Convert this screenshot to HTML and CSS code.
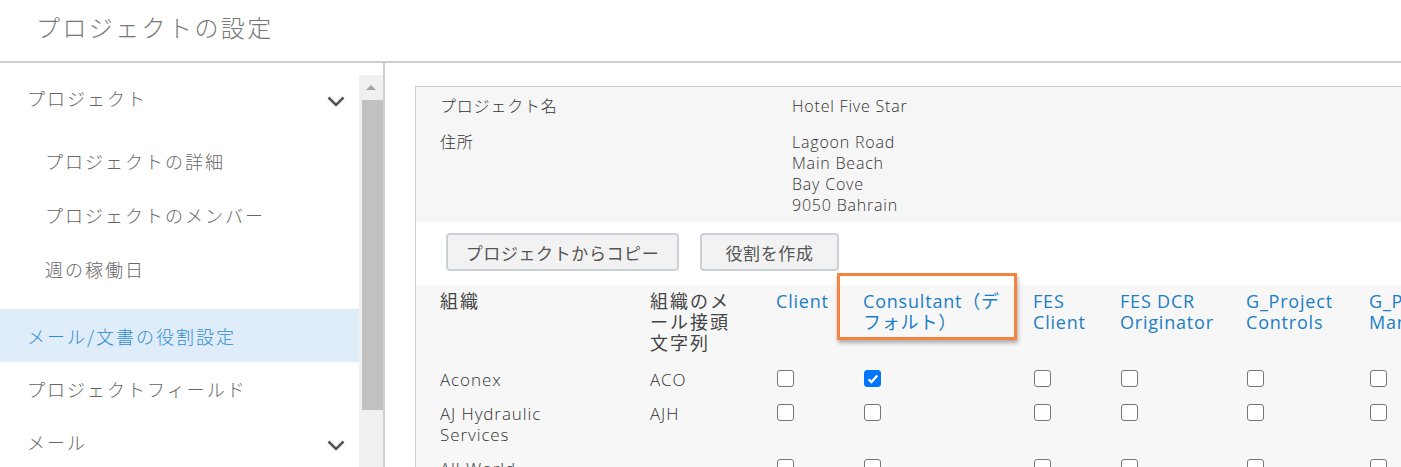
FILE: index.html
```html
<!DOCTYPE html>
<html lang="ja">
<head>
<meta charset="utf-8">
<title>プロジェクトの設定</title>
<link rel="stylesheet" href="styles.css">
</head>
<body>
<header class="topbar">
  <h1 class="title">プロジェクトの設定</h1>
</header>
<div class="main">
  <aside class="sidebar">
    <nav class="nav">
      <div class="nav-item nav-group">
        <span>プロジェクト</span>
        <svg class="chev" width="18" height="11" viewBox="0 0 18 11"><polyline points="1.5,1.5 9,9 16.5,1.5" fill="none" stroke="#555" stroke-width="2.6"/></svg>
      </div>
      <div class="subnav">
        <div class="sub-item">プロジェクトの詳細</div>
        <div class="sub-item">プロジェクトのメンバー</div>
        <div class="sub-item">週の稼働日</div>
      </div>
      <div class="nav-item active">メール/文書の役割設定</div>
      <div class="nav-item">プロジェクトフィールド</div>
      <div class="nav-item nav-group">
        <span>メール</span>
        <svg class="chev" width="18" height="11" viewBox="0 0 18 11"><polyline points="1.5,1.5 9,9 16.5,1.5" fill="none" stroke="#555" stroke-width="2.6"/></svg>
      </div>
    </nav>
    <div class="scrollbar">
      <div class="sb-up"><span class="sb-arrow"></span></div>
      <div class="sb-thumb"></div>
    </div>
  </aside>
  <section class="content">
    <div class="panel">
      <div class="info">
        <div class="info-row">
          <div class="info-label">プロジェクト名</div>
          <div class="info-value">Hotel Five Star</div>
        </div>
        <div class="info-row">
          <div class="info-label">住所</div>
          <div class="info-value">Lagoon Road<br>Main Beach<br>Bay Cove<br>9050 Bahrain</div>
        </div>
      </div>
      <div class="actions">
        <button class="btn btn-copy">プロジェクトからコピー</button>
        <button class="btn btn-create">役割を作成</button>
      </div>
      <div class="roles">
        <div class="th">組織</div>
        <div class="th">組織のメ<br>ール接頭<br>文字列</div>
        <div class="th role">Client</div>
        <div class="th role">Consultant（デ<br>フォルト）</div>
        <div class="th role">FES<br>Client</div>
        <div class="th role">FES DCR<br>Originator</div>
        <div class="th role">G_Project<br>Controls</div>
        <div class="th role">G_Project<br>Management</div>

        <div class="td">Aconex</div>
        <div class="td">ACO</div>
        <div class="td"><input type="checkbox" class="cb"></div>
        <div class="td"><input type="checkbox" class="cb" checked></div>
        <div class="td"><input type="checkbox" class="cb"></div>
        <div class="td"><input type="checkbox" class="cb"></div>
        <div class="td"><input type="checkbox" class="cb"></div>
        <div class="td"><input type="checkbox" class="cb"></div>

        <div class="td">AJ Hydraulic<br>Services</div>
        <div class="td">AJH</div>
        <div class="td"><input type="checkbox" class="cb"></div>
        <div class="td"><input type="checkbox" class="cb"></div>
        <div class="td"><input type="checkbox" class="cb"></div>
        <div class="td"><input type="checkbox" class="cb"></div>
        <div class="td"><input type="checkbox" class="cb"></div>
        <div class="td"><input type="checkbox" class="cb"></div>

        <div class="td">All World<br>Logistics</div>
        <div class="td"></div>
        <div class="td"><input type="checkbox" class="cb"></div>
        <div class="td"><input type="checkbox" class="cb"></div>
        <div class="td"><input type="checkbox" class="cb"></div>
        <div class="td"><input type="checkbox" class="cb"></div>
        <div class="td"><input type="checkbox" class="cb"></div>
        <div class="td"><input type="checkbox" class="cb"></div>
      </div>
      <div class="highlight"></div>
    </div>
  </section>
</div>
</body>
</html>
```
FILE: styles.css
```css
html, body {
  margin: 0;
  padding: 0;
  width: 1401px;
  height: 467px;
  overflow: hidden;
  background: #fff;
  font-family: "Noto Sans CJK JP", "Noto Sans", sans-serif;
}

.topbar {
  height: 61px;
  border-bottom: 2px solid #cfcfcf;
  display: flex;
  align-items: center;
  padding-left: 36px;
}

.title {
  margin: 0;
  font-size: 24px;
  font-weight: 300;
  letter-spacing: 2.4px;
  color: #777;
  line-height: 1;
  padding-bottom: 8px;
}

.main {
  display: flex;
  height: 404px;
}

.sidebar {
  width: 383px;
  flex: none;
  display: flex;
  border-right: 2px solid #cfcfcf;
}

.nav {
  width: 359px;
  flex: none;
  padding-top: 8px;
}

.nav-item {
  height: 53px;
  display: flex;
  align-items: center;
  justify-content: space-between;
  padding: 0 14px 0 27px;
  font-size: 18px;
  font-weight: 300;
  letter-spacing: 2px;
  color: #666;
}

.nav-group {
  height: 54px;
}

.chev {
  margin-top: 6px;
}

.nav-item.active {
  background: #dfecf9;
  color: #2f8bd3;
}

.subnav {
  padding: 9px 0 13px;
}

.sub-item {
  height: 54px;
  display: flex;
  align-items: center;
  padding-left: 45px;
  font-size: 18px;
  font-weight: 300;
  letter-spacing: 2px;
  color: #666;
}

.scrollbar {
  width: 24px;
  flex: none;
  margin-top: 12px;
  background: #f0f0f0;
  display: flex;
  flex-direction: column;
  align-items: flex-end;
}

.sb-up {
  height: 25px;
  width: 24px;
  display: flex;
  justify-content: center;
  align-items: center;
}

.sb-arrow {
  width: 0;
  height: 0;
  border-left: 5px solid transparent;
  border-right: 5px solid transparent;
  border-bottom: 5px solid #a3a3a3;
}

.sb-thumb {
  width: 21px;
  height: 310px;
  background: #c1c1c1;
}

.content {
  flex: 1;
  padding: 23px 0 0 30px;
  overflow: hidden;
}

.panel {
  position: relative;
  width: 1150px;
  border-left: 1px solid #cfcfcf;
  border-top: 1px solid #cfcfcf;
  background: #f7f7f7;
  color: #333;
  font-family: "Open Sans", "Noto Sans CJK JP", sans-serif;
  font-weight: 300;
  font-size: 16px;
  min-height: 400px;
}

.info {
  background: #f6f6f6;
  padding: 9px 0 6px 24px;
  display: flex;
  flex-direction: column;
  gap: 15px;
  line-height: 21px;
  letter-spacing: 0.8px;
}

.info-row {
  display: flex;
}

.info-label {
  width: 352px;
  flex: none;
}

.actions {
  background: #fff;
  height: 63px;
  display: flex;
  align-items: flex-start;
  gap: 21px;
  padding: 11px 0 0 30px;
  box-sizing: border-box;
}

.btn {
  height: 38px;
  border: 2px solid #c9d0d8;
  border-radius: 4px;
  background: #f2f2f2;
  font-family: "Noto Sans CJK JP", sans-serif;
  font-weight: 400;
  font-size: 17px;
  letter-spacing: 0.6px;
  color: #555;
  padding: 0 16px;
}

.btn-copy { width: 233px; }
.btn-create { width: 139px; }

.roles {
  display: grid;
  grid-template-columns: 210px 126px 87px 170px 87px 126px 123px 130px;
  padding-left: 24px;
  line-height: 21px;
}

.th {
  padding: 6px 6px 8px 0;
  font-size: 18px;
  font-weight: 400;
  letter-spacing: 2px;
  color: #444;
}

.th.role {
  color: #1c7ec5;
  letter-spacing: 0.8px;
  white-space: nowrap;
}

.td {
  padding: 7px 6px 6px 0;
  font-size: 17px;
  letter-spacing: 0.9px;
  color: #333;
}

.cb {
  -webkit-appearance: none;
  appearance: none;
  display: block;
  box-sizing: border-box;
  width: 17px;
  height: 17px;
  margin: 1px 0 0 1px;
  border: 1.5px solid #767676;
  border-radius: 3px;
  background: #fff;
}

.cb:checked {
  border-color: #0075ff;
  background: #0075ff url("data:image/svg+xml;utf8,<svg xmlns='http://www.w3.org/2000/svg' viewBox='0 0 14 14'><path d='M2.6 7.2l2.8 2.9L11.3 3.6' fill='none' stroke='white' stroke-width='2.3'/></svg>") center / 14px 14px no-repeat;
}

.highlight {
  position: absolute;
  left: 421px;
  top: 186px;
  width: 174px;
  height: 61px;
  border: 3px solid #f5843e;
  box-shadow: 1px 3px 4px rgba(0, 0, 0, 0.3);
  pointer-events: none;
}
```
